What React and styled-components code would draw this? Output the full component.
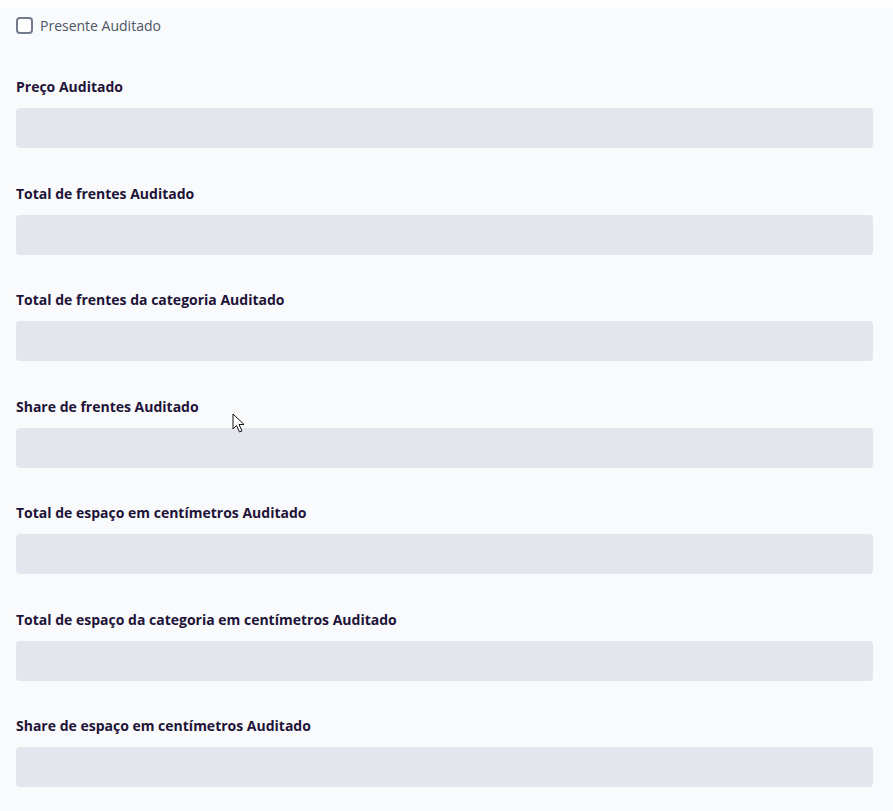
import React from 'react';
import styled, { createGlobalStyle } from 'styled-components';

const GlobalStyle = createGlobalStyle`
    body {
        margin: 0;
        background: #fdfdfe;
        font-family: "Open Sans", "Noto Sans", sans-serif;
    }
`;

const fields = [
    'Preço Auditado',
    'Total de frentes Auditado',
    'Total de frentes da categoria Auditado',
    'Share de frentes Auditado',
    'Total de espaço em centímetros Auditado',
    'Total de espaço da categoria em centímetros Auditado',
    'Share de espaço em centímetros Auditado',
];

function App(){
    return(
        <>
            <GlobalStyle />
            <Page>
                <CheckRow>
                    <Box type="checkbox" />
                    <CheckLabel>Presente Auditado</CheckLabel>
                </CheckRow>
                <Fields>
                    {fields.map((f) => (
                        <Field key={f}>
                            <Label>{f}</Label>
                            <Input type="text" />
                        </Field>
                    ))}
                </Fields>
                <Cursor width="14" height="21" viewBox="0 0 14 21">
                    <path d="M1 1 L1 16 L4.5 12.5 L7.5 19 L10 18 L7 11.5 L12 11.5 Z" fill="#fff" stroke="#111" strokeWidth="1" strokeLinejoin="round" />
                </Cursor>
            </Page>
        </>
    )
}

export default App;

const Page = styled.div`
    position: relative;
    margin-top: 8px;
    min-height: 803px;
    background: #f9fafb;
    padding: 8px 20px 0 16px;
    box-sizing: border-box;
`

const CheckRow = styled.label`
    display: flex;
    align-items: center;
    gap: 7px;
    height: 18px;
`

const Box = styled.input`
    appearance: none;
    margin: 0;
    width: 17px;
    height: 17px;
    border: 2px solid #737a8c;
    border-radius: 4px;
    background: #fff;
    box-sizing: border-box;
`

const CheckLabel = styled.span`
    font-size: 14px;
    color: #4d5566;
`

const Fields = styled.div`
    display: flex;
    flex-direction: column;
    gap: 35.5px;
    margin-top: 43px;
`

const Field = styled.div`
    display: flex;
    flex-direction: column;
`

const Label = styled.span`
    font-size: 14px;
    font-weight: 700;
    line-height: 20px;
    color: #1e1338;
    margin-bottom: 11px;
`

const Input = styled.input`
    height: 40px;
    border: none;
    border-radius: 4px;
    background: #e4e6ee;
    box-sizing: border-box;
    padding: 0 12px;
    outline: none;
`

const Cursor = styled.svg`
    position: absolute;
    left: 232px;
    top: 405px;
`
